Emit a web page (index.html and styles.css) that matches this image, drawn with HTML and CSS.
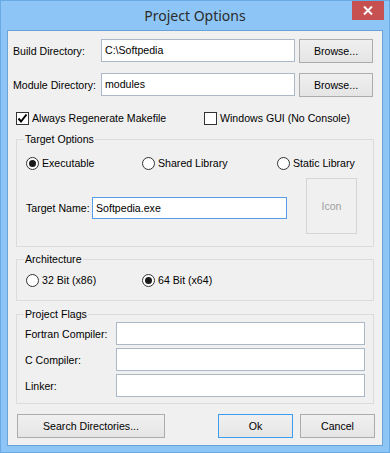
FILE: index.html
```html
<!DOCTYPE html>
<html lang="en">
  <head>
    <meta charset="UTF-8" />
    <meta name="viewport" content="width=device-width, initial-scale=1.0" />
    <title>Project Options</title>
    <link rel="stylesheet" href="styles.css">
  </head>
  <body>
    <div class="window">
      <!-- title bar -->
      <div class="titlebar">
        <div class="title">Project Options</div>
        <div class="close">
          <svg width="10" height="9" viewBox="0 0 10 9">
            <path d="M1 0.5 L9 8.5 M9 0.5 L1 8.5" stroke="#fff" stroke-width="2" />
          </svg>
        </div>
      </div>

      <div class="client">
        <div class="dir-row first">
          <span class="dir-label">Build Directory:</span>
          <div class="textbox dir-input">C:\Softpedia</div>
          <button class="btn browse">Browse...</button>
        </div>
        <div class="dir-row">
          <span class="dir-label">Module Directory:</span>
          <div class="textbox dir-input">modules</div>
          <button class="btn browse">Browse...</button>
        </div>

        <div class="check-row">
          <label class="check first-check">
            <span class="box">
              <svg width="11" height="11" viewBox="0 0 11 11">
                <path d="M1.5 5.5 L4 8.5 L9.5 1.5" stroke="#000" stroke-width="2" fill="none" />
              </svg>
            </span>
            Always Regenerate Makefile
          </label>
          <label class="check">
            <span class="box"></span>
            Windows GUI (No Console)
          </label>
        </div>

        <fieldset class="group target-group">
          <legend>Target Options</legend>
          <div class="radio-row">
            <label class="radio w1"><span class="dot on"></span>Executable</label>
            <label class="radio w2"><span class="dot"></span>Shared Library</label>
            <label class="radio"><span class="dot"></span>Static Library</label>
          </div>
          <div class="name-row">
            <span class="name-label">Target Name:</span>
            <div class="textbox name-input">Softpedia.exe</div>
            <button class="btn icon-btn">Icon</button>
          </div>
        </fieldset>

        <fieldset class="group arch-group">
          <legend>Architecture</legend>
          <div class="radio-row">
            <label class="radio w1"><span class="dot"></span>32 Bit (x86)</label>
            <label class="radio"><span class="dot on"></span>64 Bit (x64)</label>
          </div>
        </fieldset>

        <fieldset class="group flags-group">
          <legend>Project Flags</legend>
          <div class="flag-row">
            <span class="flag-label">Fortran Compiler:</span>
            <div class="textbox flag-input"></div>
          </div>
          <div class="flag-row">
            <span class="flag-label">C Compiler:</span>
            <div class="textbox flag-input"></div>
          </div>
          <div class="flag-row">
            <span class="flag-label">Linker:</span>
            <div class="textbox flag-input"></div>
          </div>
        </fieldset>

        <div class="button-row">
          <button class="btn search">Search Directories...</button>
          <button class="btn ok">Ok</button>
          <button class="btn cancel">Cancel</button>
        </div>
      </div>
    </div>
  </body>
</html>
```

FILE: styles.css
```css
body {
  margin: 0;
  padding: 0;
  font-family: "Liberation Sans", Arial, sans-serif;
  font-size: 10.6px;
  color: #000;
  background: #8dc6f6;
}

.window {
  width: 390px;
  height: 453px;
  box-sizing: border-box;
  border: 1px solid #6aaae4;
  background: #8dc6f6; /* win8 frame blue */
  padding: 0 6px 6px;
}

.titlebar {
  height: 29px;
  display: grid;
  grid-template-columns: 1fr auto 1fr;
  margin: 0 -6px;
}

.title {
  grid-column: 2;
  font-family: "Noto Sans", "Open Sans", sans-serif;
  font-size: 14px;
  line-height: 29px;
  color: #2b2b2b;
}

.close {
  grid-column: 3;
  justify-self: end;
  align-self: start;
  width: 32px;
  height: 19px;
  margin-right: 5px;
  background: #c75050;
  display: flex;
  align-items: center;
  justify-content: center;
}

.client {
  box-sizing: border-box;
  height: 416px;
  border: 1px solid #6aa3d8;
  background: #f0f0f0;
  padding-top: 8px;
  white-space: nowrap;
}

/* text boxes and buttons */
.textbox {
  box-sizing: border-box;
  height: 23px;
  background: #fff;
  border: 1px solid #abb8c8;
  padding: 3px 3px 0;
  line-height: 15px;
}

.btn {
  box-sizing: border-box;
  font-family: "Liberation Sans", Arial, sans-serif;
  font-size: 10.6px;
  color: #000;
  height: 24px;
  padding: 0;
  border: 1px solid #acacac;
  background: linear-gradient(#f0f0f0, #e5e5e5);
}

.dir-row {
  display: flex;
  align-items: flex-start;
  padding-left: 5px;
  margin-top: 10px;
}
.dir-row.first {
  margin-top: 0;
}
.dir-label {
  width: 88px;
  line-height: 23px;
  padding-top: 1px;
}
.dir-input {
  width: 194px;
}
.browse {
  width: 74px;
  margin-left: 4px;
}

.check-row {
  display: flex;
  padding-left: 8px;
  margin-top: 15px;
  height: 13px;
}
.check {
  display: flex;
  align-items: center;
  gap: 3px;
  line-height: 13px;
}
.first-check {
  width: 188px;
}
.box {
  box-sizing: border-box;
  width: 13px;
  height: 13px;
  border: 1px solid #333;
  background: #fff;
  display: flex;
  align-items: center;
  justify-content: center;
}

/* group boxes */
.group {
  box-sizing: border-box;
  width: 358px;
  margin: 8px 0 0 8px;
  padding: 0;
  border: 1px solid #dcdcdc;
}
.group legend {
  margin-left: 7px;
  padding: 0 1px;
  line-height: 13px;
}

.radio-row {
  display: flex;
  padding-left: 9px;
  margin-top: 11px;
  height: 13px;
}
.radio {
  display: flex;
  align-items: center;
  gap: 3px;
  line-height: 13px;
}
.radio.w1 {
  width: 116px;
}
.radio.w2 {
  width: 135px;
}
.dot {
  box-sizing: border-box;
  width: 13px;
  height: 13px;
  border: 1px solid #333;
  border-radius: 50%;
  background: #fff;
  display: flex;
  align-items: center;
  justify-content: center;
}
.dot.on::after {
  content: "";
  width: 7px;
  height: 7px;
  border-radius: 50%;
  background: #1a1a1a;
}

.target-group {
  padding-bottom: 12px;
}
.name-row {
  display: flex;
  align-items: center;
  padding-left: 9px;
  margin-top: 8px;
}
.name-label {
  width: 66px;
  margin-top: 4px;
}
.name-input {
  width: 195px;
  height: 22px;
  margin-top: 4px;
  border-color: #569de5;
}
.icon-btn {
  width: 51px;
  height: 56px;
  margin-left: 19px;
  border-color: #d5d5d5;
  background: #f0f0f0;
  color: #a0a0a0;
}

.arch-group {
  margin-top: 6px;
  padding-bottom: 13px;
}
.arch-group .radio-row {
  margin-top: 8px;
}

.flags-group {
  margin-top: 7px;
  padding-bottom: 6px;
}
.flag-row {
  display: flex;
  align-items: center;
  padding-left: 8px;
  margin-top: 3px;
}
.flag-row:first-of-type {
  margin-top: 1px;
}
.flag-label {
  width: 91px;
}
.flag-input {
  width: 249px;
}

.button-row {
  display: flex;
  margin: 10px 0 0 9px;
}
.search {
  width: 148px;
}
.ok {
  width: 75px;
  margin-left: 53px;
  border-color: #3c9cf0;
}
.cancel {
  width: 75px;
  margin-left: 7px;
}
```
